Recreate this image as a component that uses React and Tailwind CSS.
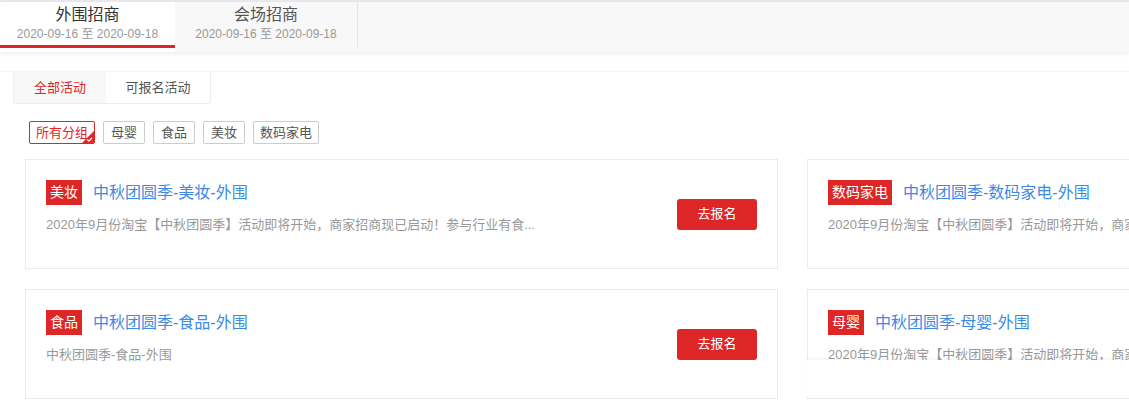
import React from "react";

const FONT = { fontFamily: '"Liberation Sans", "Noto Sans CJK SC", sans-serif' };
const LONG = "2020年9月份淘宝【中秋团圆季】活动即将开始，商家招商现已启动！参与行业有食...";
const LONG2 = "2020年9月份淘宝【中秋团圆季】活动即将开始，商家招商现已启动！参与行业有食品、美妆、母婴、数码家电";

function Card({ tag, title, desc, button = true, overlay = false }) {
  return (
    <div className="relative w-[753px] h-[110px] shrink-0 border border-[#ebebeb] bg-white flex items-center">
      <div className="flex-1 min-w-0 self-start pt-[20px] pl-[20px] overflow-hidden">
        <div className="flex items-center">
          <span className="h-[25px] px-[4px] bg-[#dd2727] text-white text-[14px] leading-[25px] whitespace-nowrap">{tag}</span>
          <span className="ml-[11px] text-[16px] leading-[25px] text-[#3b8ae6] whitespace-nowrap">{title}</span>
        </div>
        <div className="mt-[11px] text-[13px] leading-[18px] text-[#999] whitespace-nowrap">{desc}</div>
      </div>
      {button && (
        <button className="mr-[20px] w-[80px] h-[31px] rounded-[3px] bg-[#dd2727] text-white text-[13px] shrink-0">去报名</button>
      )}
      {overlay && (
        <div className="absolute left-[-2px] right-0 top-[70px] h-[36px] bg-white shadow-[0_-2px_3px_rgba(0,0,0,0.04)]" />
      )}
    </div>
  );
}

export default function App() {
  const filters = [
    { t: "母婴", c: "px-[7px]" },
    { t: "食品", c: "px-[7px]" },
    { t: "美妆", c: "px-[7px]" },
    { t: "数码家电", c: "px-[6px]" },
  ];
  return (
    <div className="w-[1129px] h-[418px] overflow-hidden bg-white" style={FONT}>
      <div className="h-[2px] bg-[#e8e8ee]" />
      <div className="relative h-[50px] bg-[#f8f8f8] flex shadow-[0_2px_4px_rgba(0,0,0,0.07)]">
        <div className="w-[175px] bg-white flex flex-col items-center pt-[3px]">
          <div className="text-[16px] leading-[20px] text-[#333]">外围招商</div>
          <div className="text-[12px] leading-[18px] text-[#999]">2020-09-16 至 2020-09-18</div>
          <div className="mt-[2px] h-[3px] w-full bg-[#dd2727]" />
        </div>
        <div className="w-[183px] flex flex-col items-center pt-[3px] self-start h-[45px] border-r border-[#e6e6e6]">
          <div className="text-[16px] leading-[20px] text-[#555]">会场招商</div>
          <div className="text-[12px] leading-[18px] text-[#999]">2020-09-16 至 2020-09-18</div>
        </div>
      </div>
      <div className="mt-[19px] border-t border-[#f4f4f4]" />
      <div className="ml-[13px] w-[198px] h-[32px] flex border border-t-0 border-[#eeeeee] rounded-b-[3px] overflow-hidden">
        <div className="w-[92px] bg-[#f8f8f8] text-[#dd2727] text-[13px] flex items-center justify-center">全部活动</div>
        <div className="flex-1 bg-white text-[#555] text-[13px] flex items-center justify-center">可报名活动</div>
      </div>
      <div className="mt-[17px] ml-[29px] flex gap-2">
        <div className="relative h-[23px] px-[6px] border border-[#dd2727] rounded-[2px] text-[13px] leading-[21px] text-[#dd2727] overflow-hidden">
          所有分组
          <svg className="absolute right-0 bottom-0" width="12" height="12" viewBox="0 0 12 12">
            <polygon points="12,0 12,12 0,12" fill="#dd2727" />
            <polyline points="5,8.5 7,10 10,7" fill="none" stroke="white" strokeWidth="1.2" />
          </svg>
        </div>
        {filters.map((f) => (
          <div key={f.t} className={`h-[23px] border border-[#cccccc] rounded-[2px] text-[13px] leading-[21px] text-[#555] ${f.c}`}>{f.t}</div>
        ))}
      </div>
      <div className="mt-[15px] ml-[25px] flex flex-col gap-[20px]">
        <div className="flex gap-[29px]">
          <Card tag="美妆" title="中秋团圆季-美妆-外围" desc={LONG} />
          <Card tag="数码家电" title="中秋团圆季-数码家电-外围" desc={LONG2} />
        </div>
        <div className="flex gap-[29px]">
          <Card tag="食品" title="中秋团圆季-食品-外围" desc="中秋团圆季-食品-外围" />
          <Card tag="母婴" title="中秋团圆季-母婴-外围" desc={LONG2} overlay />
        </div>
      </div>
    </div>
  );
}
